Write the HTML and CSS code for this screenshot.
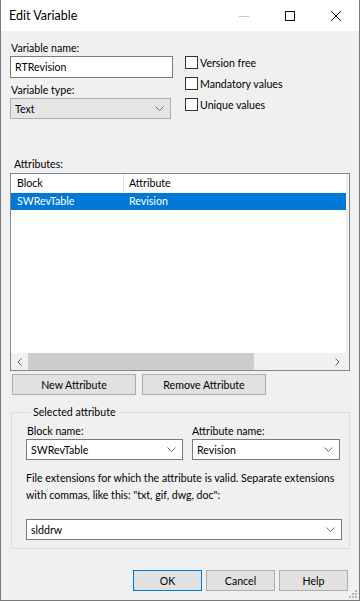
FILE: index.html
```html
<!DOCTYPE html>
<html lang="en">
<head>
  <meta charset="UTF-8">
  <title>Edit Variable</title>
  <link rel="stylesheet" href="styles.css">
</head>
<body>
  <div class="window">
    <div class="titlebar">
      <div class="title">Edit Variable</div>
      <div class="caption-buttons">
        <span class="cap-btn">
          <svg width="10" height="10" viewBox="0 0 10 10"><path d="M0 5.5h10" stroke="#c8c8c8" stroke-width="1"/></svg>
        </span>
        <span class="cap-btn">
          <svg width="10" height="10" viewBox="0 0 10 10"><rect x="0.5" y="0.5" width="9" height="9" fill="none" stroke="#111" stroke-width="1"/></svg>
        </span>
        <span class="cap-btn">
          <svg width="10" height="10" viewBox="0 0 10 10"><path d="M0 0L10 10M10 0L0 10" stroke="#111" stroke-width="1"/></svg>
        </span>
      </div>
    </div>

    <div class="content">
      <div class="top-row">
        <div class="left-col">
          <div class="label">Variable name:</div>
          <div class="textbox">RTRevision</div>
          <div class="label label-gap">Variable type:</div>
          <div class="combo combo-gray">
            <span>Text</span>
            <svg class="chev" width="9" height="5" viewBox="0 0 9 5"><path d="M0.5 0.5L4.5 4.5L8.5 0.5" fill="none" stroke="#707070"/></svg>
          </div>
        </div>
        <div class="checks">
          <label class="check"><span class="box"></span>Version free</label>
          <label class="check"><span class="box"></span>Mandatory values</label>
          <label class="check"><span class="box"></span>Unique values</label>
        </div>
      </div>

      <div class="label attr-label">Attributes:</div>
      <div class="listview">
        <div class="lv-body">
          <div class="lv-header">
            <div class="col col-block">Block</div>
            <div class="col col-attr">Attribute</div>
          </div>
          <div class="lv-row selected">
            <div class="col col-block">SWRevTable</div>
            <div class="col col-attr">Revision</div>
          </div>
          <div class="lv-empty"></div>
          <div class="hscroll">
            <span class="arrow">
              <svg width="5" height="8" viewBox="0 0 5 8"><path d="M4.5 0.5L1 4L4.5 7.5" fill="none" stroke="#606060"/></svg>
            </span>
            <div class="track"><div class="thumb"></div></div>
            <span class="arrow">
              <svg width="5" height="8" viewBox="0 0 5 8"><path d="M0.5 0.5L4 4L0.5 7.5" fill="none" stroke="#606060"/></svg>
            </span>
          </div>
        </div>
        <div class="lv-side"></div>
      </div>

      <div class="btn-row">
        <button class="btn wide">New Attribute</button>
        <button class="btn wide">Remove Attribute</button>
      </div>

      <fieldset class="group">
        <legend>Selected attribute</legend>
        <div class="group-row">
          <div class="field block-field">
            <div class="label">Block name:</div>
            <div class="combo">
              <span>SWRevTable</span>
              <svg class="chev" width="9" height="5" viewBox="0 0 9 5"><path d="M0.5 0.5L4.5 4.5L8.5 0.5" fill="none" stroke="#707070"/></svg>
            </div>
          </div>
          <div class="field attr-field">
            <div class="label">Attribute name:</div>
            <div class="combo">
              <span>Revision</span>
              <svg class="chev" width="9" height="5" viewBox="0 0 9 5"><path d="M0.5 0.5L4.5 4.5L8.5 0.5" fill="none" stroke="#707070"/></svg>
            </div>
          </div>
        </div>
        <p class="hint">File extensions for which the attribute is valid. Separate extensions with commas, like this: "txt, gif, dwg, doc":</p>
        <div class="combo ext-combo">
          <span>slddrw</span>
          <svg class="chev" width="9" height="5" viewBox="0 0 9 5"><path d="M0.5 0.5L4.5 4.5L8.5 0.5" fill="none" stroke="#707070"/></svg>
        </div>
      </fieldset>

      <div class="footer">
        <button class="btn dlg default">OK</button>
        <button class="btn dlg">Cancel</button>
        <button class="btn dlg">Help</button>
      </div>
    </div>
    <svg class="grip" width="8" height="8" viewBox="0 0 8 8">
      <rect x="6" y="0" width="2" height="2" fill="#b8b8b8"/>
      <rect x="3" y="3" width="2" height="2" fill="#b8b8b8"/>
      <rect x="6" y="3" width="2" height="2" fill="#b8b8b8"/>
      <rect x="0" y="6" width="2" height="2" fill="#b8b8b8"/>
      <rect x="3" y="6" width="2" height="2" fill="#b8b8b8"/>
      <rect x="6" y="6" width="2" height="2" fill="#b8b8b8"/>
    </svg>
  </div>
</body>
</html>
```

FILE: styles.css
```css
* {
  box-sizing: border-box;
}

body {
  margin: 0;
  padding: 0;
  font-family: "Segoe UI", Lato, "Noto Sans", sans-serif;
  font-size: 10.6px;
  color: #000;
  background: #f0f0f0;
}

.window {
  position: relative;
  width: 360px;
  height: 601px;
  background-color: #f0f0f0;
  border-left: 1px solid #7a7a7a;
  border-right: 1px solid #7a7a7a;
  border-bottom: 1px solid #7a7a7a;
  overflow: hidden;
}

.titlebar {
  height: 31px;
  background: #fff;
  display: flex;
  align-items: center;
  justify-content: space-between;
}

.title {
  font-size: 12.5px;
  padding-left: 8px;
  color: #000;
}

.caption-buttons {
  display: flex;
  height: 100%;
}

.cap-btn {
  width: 46px;
  display: flex;
  align-items: center;
  justify-content: center;
}

.content {
  padding: 10px 10px 0 9px;
}

.label {
  height: 15px;
  line-height: 15px;
  padding-left: 1px;
}

.label-gap {
  margin-top: 5px;
}

.top-row {
  display: flex;
  height: 116px;
}

.left-col {
  width: 163px;
}

.textbox {
  height: 22px;
  border: 1px solid #7a7a7a;
  background: #fff;
  padding: 0 4px;
  line-height: 20px;
}

.combo {
  height: 21px;
  border: 1px solid #7a7a7a;
  background: #fff;
  display: flex;
  align-items: center;
  justify-content: space-between;
  padding: 0 6px 0 4px;
}

.combo-gray {
  background: #e5e5e5;
  border-color: #adadad;
  width: 161px;
}

.checks {
  margin-left: 12px;
  padding-top: 15px;
  display: flex;
  flex-direction: column;
  gap: 8px;
}

.check {
  display: flex;
  align-items: center;
  height: 13px;
}

.box {
  width: 13px;
  height: 13px;
  border: 1px solid #333;
  background: #fff;
  margin-right: 2px;
}

.attr-label {
  margin-left: 3px;
}

.listview {
  margin-top: 1px;
  height: 198px;
  width: 340px;
  border: 1px solid #828790;
  background: #fff;
  display: flex;
}

.lv-body {
  flex: 1;
  display: flex;
  flex-direction: column;
}

.lv-side {
  width: 3px;
  background: #f0f0f0;
}

.lv-header,
.lv-row {
  display: flex;
  height: 19px;
  line-height: 19px;
}

.lv-header .col-block {
  border-right: 1px solid #e5e5e5;
}

.lv-row {
  height: 17px;
  line-height: 17px;
}

.col-block {
  width: 113px;
  padding-left: 6px;
}

.col-attr {
  padding-left: 5px;
}

.selected {
  background: #0078d7;
  color: #fff;
}

.lv-empty {
  flex: 1;
}

.hscroll {
  height: 17px;
  background: #f0f0f0;
  display: flex;
  align-items: center;
}

.arrow {
  width: 17px;
  display: flex;
  justify-content: center;
}

.track {
  flex: 1;
  height: 100%;
}

.thumb {
  width: 226px;
  height: 100%;
  background: #cdcdcd;
}

.btn-row {
  display: flex;
  gap: 6px;
  margin-top: 3px;
  margin-left: 2px;
}

.btn {
  font-family: inherit;
  font-size: 10.6px;
  height: 21px;
  background: #e1e1e1;
  border: 1px solid #adadad;
  padding: 0;
  color: #000;
}

.btn.wide {
  width: 124px;
}

.group {
  margin: 10px 0 0 1px;
  width: 339px;
  height: 144px;
  border: 1px solid #dcdcdc;
  padding: 0 0 0 14px;
}

.group legend {
  padding: 0 2px;
  margin-left: 5px;
  line-height: 15px;
}

.group-row {
  display: flex;
  gap: 9px;
  margin-top: 4px;
}

.block-field {
  width: 157px;
}

.attr-field {
  width: 148px;
}

.attr-field .label {
  padding-left: 0;
}

.hint {
  margin: 10px 0 0 0;
  line-height: 17px;
  width: 316px;
}

.ext-combo {
  margin-top: 15px;
  width: 316px;
}

.footer {
  display: flex;
  justify-content: flex-end;
  gap: 4px;
  margin-top: 21px;
  padding-right: 1px;
}

.btn.dlg {
  width: 69px;
}

.btn.default {
  border: 1px solid #0078d7;
}

.grip {
  position: absolute;
  right: 2px;
  bottom: 2px;
}
```
